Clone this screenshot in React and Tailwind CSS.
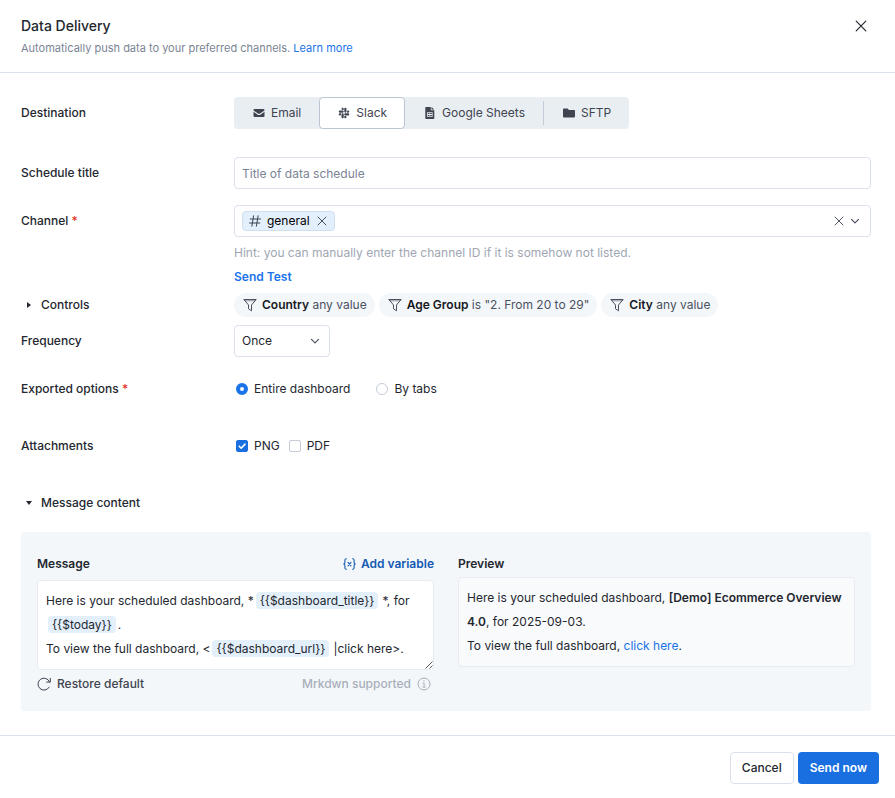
import { useState } from 'react'
import { FaSlack } from 'react-icons/fa'

function CloseIcon({ className }) {
  return (
    <svg viewBox="0 0 12 12" className={className} fill="none" stroke="currentColor" strokeWidth="1.2" strokeLinecap="round" aria-hidden="true">
      <path d="M1.2 1.2l9.6 9.6M10.8 1.2l-9.6 9.6" />
    </svg>
  )
}

function ChevronIcon({ className }) {
  return (
    <svg viewBox="0 0 10 10" className={className} fill="none" stroke="currentColor" strokeWidth="1.2" strokeLinecap="round" strokeLinejoin="round" aria-hidden="true">
      <path d="M1.5 3.3L5 6.8l3.5-3.5" />
    </svg>
  )
}

function MailIcon() {
  return (
    <svg viewBox="0 0 12 12" className="size-3" fill="currentColor" aria-hidden="true">
      <path d="M1.6 2h8.8A1.1 1.1 0 0 1 11.5 3v.5L7 6.6a1.8 1.8 0 0 1-2 0L.5 3.5V3A1.1 1.1 0 0 1 1.6 2z" />
      <path d="M.5 4.7l3.9 2.7a2.8 2.8 0 0 0 3.2 0l3.9-2.7V9a1.1 1.1 0 0 1-1.1 1.1H1.6A1.1 1.1 0 0 1 .5 9z" />
    </svg>
  )
}

function SheetIcon() {
  return (
    <svg viewBox="0 0 12 12" className="size-3" fill="currentColor" aria-hidden="true">
      <path
        fillRule="evenodd"
        d="M2 0h4.8v3.2h3.5v8a.8.8 0 0 1-.8.8H2.1a.8.8 0 0 1-.8-.8V.8A.8.8 0 0 1 2 0zM3 5.2v4.6h5.6V5.2zM3.8 6h1.7v1.1H3.8zm2.4 0h1.7v1.1H6.2zM3.8 7.9h1.7V9H3.8zm2.4 0h1.7V9H6.2z"
      />
      <path d="M7.5 0l2.8 2.6H7.5z" />
    </svg>
  )
}

function FolderIcon() {
  return (
    <svg viewBox="0 0 12 12" className="size-3" fill="currentColor" aria-hidden="true">
      <path d="M1.1 1.6h3.5l1.3 1.3h5A1 1 0 0 1 12 4v5.4a1 1 0 0 1-1 1H1.1a1 1 0 0 1-1.1-1V2.6a1 1 0 0 1 1.1-1z" />
    </svg>
  )
}

function HashIcon() {
  return (
    <svg viewBox="0 0 12 12" className="size-3" fill="none" stroke="#3b4252" strokeLinecap="round" aria-hidden="true">
      <path d="M4.6.8L2.9 11.2M9.1.8L7.4 11.2M1.2 4h10.3M.5 8h10.3" />
    </svg>
  )
}

function FunnelIcon() {
  return (
    <svg viewBox="0 0 14 14" className="size-3.5" fill="none" stroke="#4b5160" strokeLinejoin="round" aria-hidden="true">
      <path d="M.9 1.5h12.2L8.5 7v5.8l-3-2V7z" />
      <path d="M.9 1.5l1 1.3h10.2l1-1.3" strokeWidth=".6" />
    </svg>
  )
}

function VariableIcon() {
  return (
    <svg viewBox="0 0 13 12" className="h-3 w-[13px]" fill="none" stroke="currentColor" strokeWidth="1.1" strokeLinecap="round" strokeLinejoin="round" aria-hidden="true">
      <path d="M3.4.7c-1.2 0-1.5.5-1.5 1.5v2.2c0 .9-.4 1.4-1.3 1.6.9.2 1.3.7 1.3 1.6v2.2c0 1 .3 1.5 1.5 1.5" />
      <path d="M9.6.7c1.2 0 1.5.5 1.5 1.5v2.2c0 .9.4 1.4 1.3 1.6-.9.2-1.3.7-1.3 1.6v2.2c0 1-.3 1.5-1.5 1.5" />
      <path d="M5 4.4l3 3.4M8 4.4L5 7.8" />
    </svg>
  )
}

function RestoreIcon() {
  return (
    <svg viewBox="0 0 14 14" className="size-3.5" fill="none" stroke="currentColor" strokeLinecap="round" strokeLinejoin="round" aria-hidden="true">
      <path d="M12.2 10.2A6 6 0 1 1 12.6 4.9" />
      <path d="M13.3 1.4v3.7H9.6" />
    </svg>
  )
}

function InfoIcon() {
  return (
    <svg viewBox="0 0 14 14" className="size-3.5" fill="none" stroke="currentColor" aria-hidden="true">
      <circle cx="7" cy="7" r="6" />
      <path d="M5.8 6h1.3v4M5.6 10.1h2.9" />
      <circle cx="7" cy="3.9" r=".7" fill="currentColor" stroke="none" />
    </svg>
  )
}

const DESTINATIONS = [
  { id: 'email', label: 'Email', icon: <MailIcon /> },
  { id: 'slack', label: 'Slack', icon: <FaSlack className="size-3" /> },
  { id: 'sheets', label: 'Google Sheets', icon: <SheetIcon /> },
  { id: 'sftp', label: 'SFTP', icon: <FolderIcon /> },
]

const CONTROLS = [
  { name: 'Country', value: 'any value' },
  { name: 'Age Group', value: 'is "2. From 20 to 29"' },
  { name: 'City', value: 'any value' },
]

function Row({ label, htmlFor, required, className = '', children }) {
  const Label = htmlFor ? 'label' : 'span'
  return (
    <div className={`flex ${className}`}>
      <div className="flex h-8 w-[213px] shrink-0 items-center font-medium">
        <Label htmlFor={htmlFor}>
          {label}
          {required && <span className="text-[#e5342b]"> *</span>}
        </Label>
      </div>
      <div className="min-w-0 flex-1">{children}</div>
    </div>
  )
}

function Radio({ label, checked, onChange }) {
  return (
    <label className="flex items-center gap-1.5">
      <input
        type="radio"
        name="exported"
        checked={checked}
        onChange={onChange}
        className="size-3 appearance-none rounded-full border border-[#c5cbd8] bg-white checked:border-4 checked:border-[#1a73e8]"
      />
      {label}
    </label>
  )
}

function Checkbox({ label, checked, onChange }) {
  return (
    <label className="flex items-center gap-1.5">
      <span className="relative flex size-3">
        <input
          type="checkbox"
          checked={checked}
          onChange={onChange}
          className="size-3 appearance-none rounded-xs border border-[#c5cbd8] bg-white checked:border-[#1a6fe0] checked:bg-[#1a6fe0]"
        />
        {checked && (
          <svg viewBox="0 0 12 12" className="pointer-events-none absolute inset-0" fill="none" stroke="white" strokeWidth="1.6" strokeLinecap="round" strokeLinejoin="round" aria-hidden="true">
            <path d="M3.2 6.2l2 2 3.8-4.1" />
          </svg>
        )}
      </span>
      {label}
    </label>
  )
}

function Variable({ children }) {
  return <span className="mx-0.5 rounded bg-[#e3effb] px-1 py-px">{children}</span>
}

export default function App() {
  const [destination, setDestination] = useState('slack')
  const [exported, setExported] = useState('dashboard')
  const [png, setPng] = useState(true)
  const [pdf, setPdf] = useState(false)

  return (
    <div className="bg-white font-[Inter,sans-serif] text-xs text-[#24272f]">
      <header className="flex items-start justify-between border-b border-[#dbe1ec] py-4 pr-6 pl-[21px]">
        <div>
          <h1 className="text-sm leading-5 font-medium">Data Delivery</h1>
          <p className="mt-1 text-[11px] leading-4 text-[#7b8495]">
            Automatically push data to your preferred channels.{' '}
            <a href="#" className="text-[#1a73e8]">Learn more</a>
          </p>
        </div>
        <button aria-label="Close" className="flex size-5 items-center justify-center">
          <CloseIcon className="size-3" />
        </button>
      </header>

      <main className="pt-6 pr-6 pb-6 pl-[21px]">
        <Row label="Destination">
          <div className="inline-flex h-8 rounded bg-[#e9eef2] text-[#3f4450]">
            {DESTINATIONS.map((d) => (
              <button
                key={d.id}
                onClick={() => setDestination(d.id)}
                aria-pressed={destination === d.id}
                className={
                  destination === d.id
                    ? 'flex items-center gap-1.5 rounded border border-[#bcc4d2] bg-white pr-[17px] pl-[18px]'
                    : 'flex items-center'
                }
              >
                {destination === d.id ? (
                  <>{d.icon}{d.label}</>
                ) : (
                  <span className={`flex h-6 items-center gap-1.5 pr-[18px] pl-[19px] ${d.id === 'sftp' ? 'border-l border-[#c5cbd8]' : ''}`}>
                    {d.icon}{d.label}
                  </span>
                )}
              </button>
            ))}
          </div>
        </Row>

        <Row label="Schedule title" htmlFor="title" className="mt-7">
          <input
            id="title"
            type="text"
            placeholder="Title of data schedule"
            className="block h-8 w-full rounded border border-[#dbe1ec] px-[7px] placeholder:text-[#7b8495]"
          />
        </Row>

        <Row label="Channel" htmlFor="channel" required className="mt-4">
          <div className="flex h-8 items-center rounded border border-[#dbe1ec] px-[7px]">
            <span className="flex h-5 items-center gap-1.5 rounded border border-[#cfdff0] bg-[#e3effb] px-1.5 text-black">
              <HashIcon />
              general
              <button aria-label="Remove general" className="text-[#4b5160]">
                <CloseIcon className="size-3 p-px" />
              </button>
            </span>
            <input id="channel" type="text" className="min-w-0 flex-1 px-1 outline-none" />
            <button aria-label="Clear channels" className="mr-1.5 text-[#4b5160]">
              <CloseIcon className="size-2.5" />
            </button>
            <button aria-label="Open channel list" className="mr-[3px] text-[#4b5160]">
              <ChevronIcon className="size-2.5" />
            </button>
          </div>
          <p className="mt-2 leading-4 text-[#a0a7b3]">
            Hint: you can manually enter the channel ID if it is somehow not listed.
          </p>
          <button className="mt-2 block leading-4 font-semibold text-[#1a73e8]">Send Test</button>
        </Row>

        <div className="mt-2 flex">
          <button className="flex h-6 w-[213px] shrink-0 items-center gap-2 pl-1 font-medium">
            <svg viewBox="0 0 8 8" className="size-2" fill="currentColor" aria-hidden="true">
              <path d="M2 1l4 3-4 3z" />
            </svg>
            Controls
          </button>
          <div className="flex flex-wrap gap-1">
            {CONTROLS.map((c) => (
              <span key={c.name} className="flex h-6 items-center gap-[5px] rounded-full bg-[#f3f7fa] pr-2 pl-[9px] text-[#4b5160]">
                <FunnelIcon />
                <span>
                  <span className="font-semibold text-[#16181d]">{c.name}</span> {c.value}
                </span>
              </span>
            ))}
          </div>
        </div>

        <Row label="Frequency" htmlFor="frequency" className="mt-2">
          <div className="relative w-24">
            <select id="frequency" className="block h-8 w-full appearance-none rounded border border-[#dbe1ec] bg-white px-[7px]">
              <option>Once</option>
            </select>
            <ChevronIcon className="pointer-events-none absolute top-[11px] right-2.5 size-2.5 text-[#4b5160]" />
          </div>
        </Row>

        <Row label="Exported options" required className="mt-4">
          <div className="flex h-8 items-center gap-[26px] pl-0.5">
            <Radio label="Entire dashboard" checked={exported === 'dashboard'} onChange={() => setExported('dashboard')} />
            <Radio label="By tabs" checked={exported === 'tabs'} onChange={() => setExported('tabs')} />
          </div>
        </Row>

        <Row label="Attachments" className="mt-[25px]">
          <div className="flex h-8 items-center gap-[9px] pl-0.5">
            <Checkbox label="PNG" checked={png} onChange={() => setPng(!png)} />
            <Checkbox label="PDF" checked={pdf} onChange={() => setPdf(!pdf)} />
          </div>
        </Row>

        <button className="mt-[25px] flex h-8 items-center gap-2 pl-1 font-medium">
          <svg viewBox="0 0 8 8" className="size-2" fill="currentColor" aria-hidden="true">
            <path d="M1 2l3 4 3-4z" />
          </svg>
          Message content
        </button>

        <section className="mt-[13px] grid grid-cols-2 items-start gap-6 rounded bg-[#f3f7fa] px-4 pt-5 pb-[19px]">
          <div>
            <div className="flex h-6 items-center justify-between font-semibold">
              <span id="message-label">Message</span>
              <button className="flex items-center gap-[5px] text-[#1459b3]">
                <VariableIcon />
                Add variable
              </button>
            </div>
            <div
              role="textbox"
              aria-labelledby="message-label"
              aria-multiline="true"
              contentEditable
              suppressContentEditableWarning
              className="relative mt-1 rounded border border-[#e8ecf2] bg-white p-2 leading-6"
            >
              Here is your scheduled dashboard, *<Variable>{'{{$dashboard_title}}'}</Variable>
              <span className="ml-0.5">*, for </span>
              <Variable>{'{{$today}}'}</Variable>.<br />
              To view the full dashboard, &lt;<Variable>{'{{$dashboard_url}}'}</Variable>
              <span className="ml-0.5">|click here&gt;.</span>
              <svg viewBox="0 0 8 8" className="absolute right-0 bottom-0 size-2" stroke="#3f4450" strokeWidth=".9" aria-hidden="true">
                <path d="M.5 7.5l7-7M4.5 7.5l3-3" />
              </svg>
            </div>
            <div className="mt-1.5 flex h-4 items-center justify-between font-medium">
              <button className="flex items-center gap-1.5 text-[#3f4450]">
                <RestoreIcon />
                Restore default
              </button>
              <span className="flex items-center gap-1.5 pr-[3px] text-[#a9afba]">
                Mrkdwn supported
                <InfoIcon />
              </span>
            </div>
          </div>

          <div>
            <h2 className="leading-6 font-semibold">Preview</h2>
            <div className="mt-px rounded border border-[#e8ecf2] bg-[#f9fafc] p-2 leading-6">
              Here is your scheduled dashboard, <strong className="font-semibold">[Demo] Ecommerce Overview 4.0</strong>, for
              2025-09-03.
              <br />
              To view the full dashboard, <a href="#" className="text-[#1a73e8]">click here</a>.
            </div>
          </div>
        </section>
      </main>

      <footer className="flex justify-end gap-1 border-t border-[#dbe1ec] px-4 pt-4 pb-3.5">
        <button className="h-8 rounded border border-[#dbe1ec] px-[11px] font-medium">Cancel</button>
        <button className="h-8 rounded bg-[#1a6fe0] px-3 font-semibold text-white">Send now</button>
      </footer>
    </div>
  )
}
